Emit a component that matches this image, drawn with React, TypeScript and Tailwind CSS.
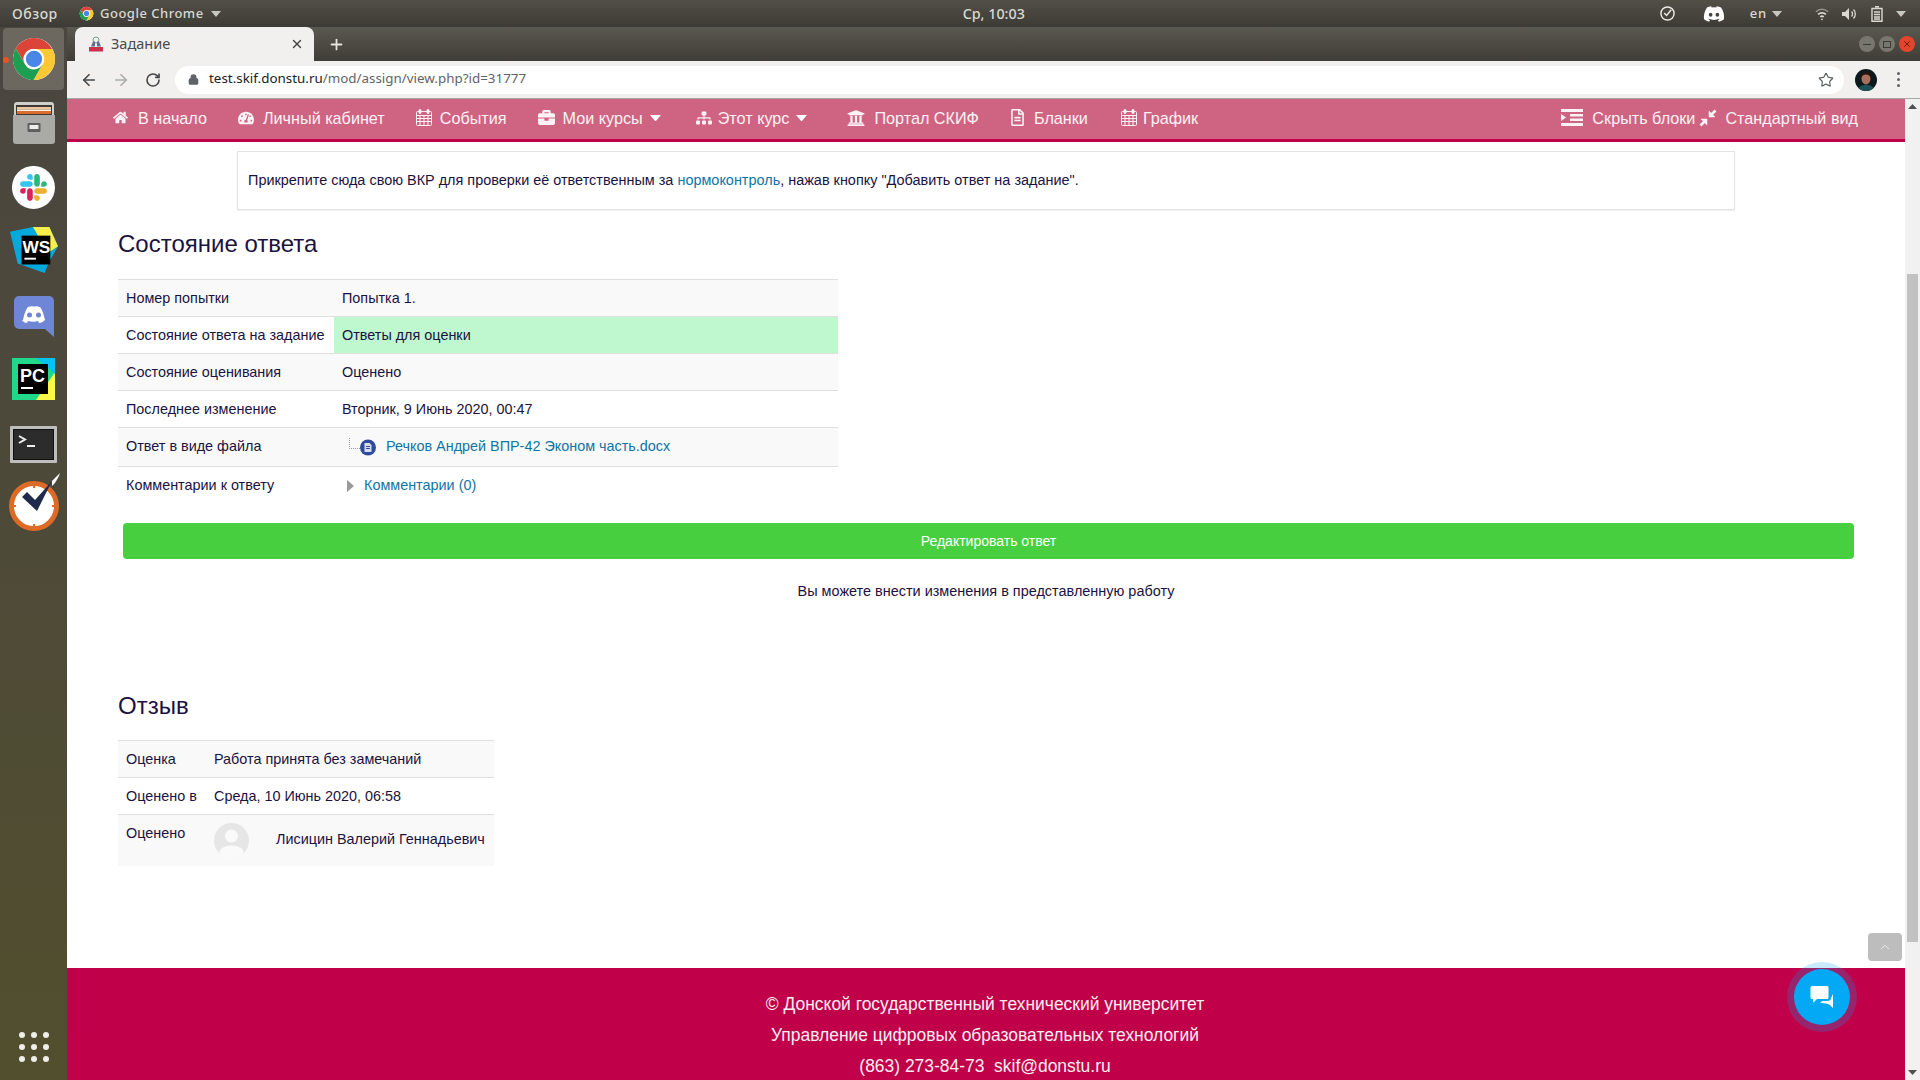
import { FaBriefcase, FaDiscord, FaHome, FaRegFileAlt, FaSitemap, FaTachometerAlt, FaUniversity } from 'react-icons/fa';
import { ArrowLeft, ArrowRight, ChevronUp, Lock, Plus, RotateCw, Star, X } from 'lucide-react';

const ChromeLogo = ({ size }: { size: number }) => (
  <svg width={size} height={size} viewBox="0 0 48 48" className="shrink-0">
    <circle cx="24" cy="24" r="22" fill="#fff" />
    <path d="M24 2C15.9 2 8.8 6.4 5 12.9l9.6 16.6A10.5 10.5 0 0 1 24 13.5h19C39.2 6.6 32.100 2 24 2z" fill="#db4437" />
    <path d="M43 13.500H24a10.500 10.500 0 0 1 9.100 15.800L23.500 46C35.500 46 46 36 46 24c0-3.800-1.100-7.400-3-10.500z" fill="#fcc934" />
    <path d="M23.500 46l9.600-16.700a10.500 10.500 0 0 1-18.500.2L5 12.900A21.900 21.900 0 0 0 2 24c0 11 8.100 20.200 18.700 21.800z" fill="#1e9e50" />
    <circle cx="24" cy="24" r="10.500" fill="#fff" />
    <circle cx="24" cy="24" r="8.500" fill="#4a86e8" />
  </svg>
);

const Caret = ({ color = '#fff', w = 10 }: { color?: string; w?: number }) => (
  <svg width={w} height={w / 2 + 1} viewBox="0 0 10 6" className="shrink-0">
    <path d="M0 0h10L5 6z" fill={color} />
  </svg>
);

// fa-calendar from the old FontAwesome: outline with rings and a grid
const CalendarIcon = () => (
  <svg width="16" height="17" viewBox="0 0 16 17" className="shrink-0" fill="none" stroke="#fdf2f5">
    <rect x="0.500" y="2.500" width="15" height="14" rx="1" />
    <path d="M0.500 6.500h15M0.500 9.500h15M0.500 12.500h15M4 6.500v10M8 6.500v10M12 6.500v10" />
    <rect x="3" y="0.500" width="2" height="4" rx="1" fill="#fdf2f5" />
    <rect x="11" y="0.500" width="2" height="4" rx="1" fill="#fdf2f5" />
  </svg>
);

const IndentIcon = () => (
  <svg width="22" height="17" viewBox="0 0 22 17" className="shrink-0" fill="#fdf2f5">
    <rect width="22" height="3" />
    <rect x="9" y="5" width="13" height="2.500" />
    <rect x="9" y="9.500" width="13" height="2.500" />
    <rect y="14" width="22" height="3" />
    <path d="M0 5l5 3.500L0 12z" />
  </svg>
);

const CompressIcon = () => (
  <svg width="18" height="18" viewBox="0 0 18 18" className="shrink-0" fill="#fdf2f5" stroke="#fdf2f5">
    <path d="M10 2v6h6z" strokeWidth="0.500" />
    <path d="M12.500 5.500l4-4" strokeWidth="2.500" />
    <path d="M8 16v-6H2z" strokeWidth="0.500" />
    <path d="M5.500 12.500l-4 4" strokeWidth="2.500" />
  </svg>
);

const TopBar = () => (
  <div className="flex h-[27px] shrink-0 items-center bg-gradient-to-b from-[#524f47] to-[#3d3b35] font-['Noto_Sans',sans-serif] text-[13px] font-medium tracking-[0.5px] text-[#d9d9d2]">
    <span className="ml-[12px] w-[67px] text-[14px]">Обзор</span>
    <ChromeLogo size={15} />
    <span className="ml-[6px] whitespace-nowrap">Google Chrome</span>
    <span className="ml-[7px]">
      <Caret color="#c8c8c2" />
    </span>
    <span className="ml-[742px] w-[63px] whitespace-nowrap text-[14.300px] tracking-normal">Ср, 10:03</span>
    <svg width="15" height="15" viewBox="0 0 16 16" className="ml-[634px] shrink-0" fill="none" stroke="#ecebe6" strokeWidth="1.500">
      <circle cx="8" cy="8" r="7" />
      <path d="M4.500 7.500l2.500 2.500 5-6" />
    </svg>
    <FaDiscord className="ml-[28px] shrink-0 text-[22px] text-white" />
    <span className="ml-[25px] w-[22px] tracking-[1px]">en</span>
    <Caret color="#c8c8c2" />
    <svg width="14" height="14" viewBox="0 0 16 16" className="ml-[33px] shrink-0" fill="none" stroke="#d9d9d2" strokeWidth="1.800">
      <path d="M1 5.500a10 10 0 0 1 14 0" opacity="0.500" />
      <path d="M3.500 8.500a6.500 6.500 0 0 1 9 0" />
      <path d="M6 11.300a3 3 0 0 1 4 0" />
      <circle cx="8" cy="14" r="1" fill="#d9d9d2" stroke="none" />
    </svg>
    <svg width="16" height="14" viewBox="0 0 16 14" className="ml-[13px] shrink-0" fill="none">
      <path d="M0 5h3l4-4v12l-4-4H0z" fill="#d9d9d2" />
      <path d="M9.500 4.500a3.500 3.500 0 0 1 0 5M11.500 2.500a6.500 6.500 0 0 1 0 9" stroke="#d9d9d2" strokeWidth="1.300" />
    </svg>
    <svg width="12" height="16" viewBox="0 0 12 16" className="ml-[13px] shrink-0" fill="none" stroke="#d9d9d2" strokeWidth="1.400">
      <path d="M4 .7h4M1 2.500h10v12.800H1z" />
      <path d="M3 6h6M3 8.500h6M3 11h6M3 13h6" />
    </svg>
    <span className="ml-[13px]">
      <Caret color="#c8c8c2" />
    </span>
  </div>
);

const WindowButton = ({ close, children }: { close?: boolean; children: React.ReactNode }) => (
  <div
    className={`flex h-[16px] w-[16px] items-center justify-center rounded-full ${
      close ? 'bg-[#e2452c]' : 'bg-[#77766f]'
    }`}
  >
    {children}
  </div>
);

const TabStrip = () => (
  <div className="flex h-[34px] shrink-0 items-end bg-gradient-to-b from-[#5a5950] to-[#3f3d37] pl-[8px]">
    <div className="flex h-[34px] w-[239px] items-center rounded-t-[8px] bg-[#f1f0ee] pb-[1px] pl-[13px] pr-[10px] font-['Noto_Sans',sans-serif] text-[14.500px] text-[#4a4a4a]">
      <svg width="16" height="16" viewBox="0 0 16 16" className="shrink-0">
        <circle cx="8" cy="4" r="3" fill="none" stroke="#6fa287" />
        <path d="M3 10.500l2-5h2v5zM9 10.500v-5h2l2 5z" fill="#5a6f93" />
        <rect x="1" y="11" width="14" height="4.500" fill="#c9314f" />
      </svg>
      <span className="ml-[7px] flex-1">Задание</span>
      <X size={14} strokeWidth={2.500} color="#444" />
    </div>
    <Plus size={17} strokeWidth={2.500} color="#e4e4e0" className="mb-[8px] ml-[14px]" />
    <div className="mb-[9px] ml-auto mr-[5px] flex gap-[4px]">
      <WindowButton>
        <span className="h-[1px] w-[8px] bg-[#3b3a35]" />
      </WindowButton>
      <WindowButton>
        <span className="h-[7px] w-[8px] border border-[#3b3a35]" />
      </WindowButton>
      <WindowButton close>
        <X size={10} strokeWidth={2} color="#5e120a" />
      </WindowButton>
    </div>
  </div>
);

const Toolbar = () => (
  <div className="flex h-[38px] shrink-0 items-center border-b border-[#a8a8a8] bg-[#f1f0ee]">
    <ArrowLeft size={18} strokeWidth={2.200} color="#45474a" className="ml-[13px]" />
    <ArrowRight size={18} strokeWidth={2.200} color="#a9aaac" className="ml-[14px]" />
    <RotateCw size={16} strokeWidth={2.400} color="#45474a" className="ml-[15px]" />
    <div className="ml-[14px] flex h-[28px] w-[1669px] items-center rounded-full bg-white pl-[13px] font-['Noto_Sans',sans-serif] text-[13.400px]">
      <Lock size={11} strokeWidth={3} color="#5f6368" fill="#5f6368" />
      <span className="mb-[2px] ml-[10px] text-[#202124]">test.skif.donstu.ru</span>
      <span className="mb-[2px] text-[#5f6368]">/mod/assign/view.php?id=31777</span>
      <Star size={16} strokeWidth={1.800} color="#5f6368" className="ml-auto mr-[10px]" />
    </div>
    <svg width="22" height="22" viewBox="0 0 22 22" className="ml-[11px] shrink-0">
      <defs>
        <clipPath id="avatar-clip">
          <circle cx="11" cy="11" r="11" />
        </clipPath>
      </defs>
      <g clipPath="url(#avatar-clip)">
        <rect width="22" height="22" fill="#0d1a1d" />
        <path d="M2 22c1-5 5-6 9-6s8 1 9 6z" fill="#1c5058" />
        <ellipse cx="11" cy="9.500" rx="4.500" ry="6" fill="#a8705a" />
        <path d="M6 9c-.5-5 3-7 6-6.500 3 .5 4.500 3 4 7-1-3-2.500-4-5-4-2 0-4 1-5 3.500z" fill="#231511" />
      </g>
    </svg>
    <div className="ml-[20px] flex flex-col gap-[3px]">
      <span className="h-[3px] w-[3px] rounded-full bg-[#5f6368]" />
      <span className="h-[3px] w-[3px] rounded-full bg-[#5f6368]" />
      <span className="h-[3px] w-[3px] rounded-full bg-[#5f6368]" />
    </div>
  </div>
);

const SlackLogo = () => (
  <svg width="43" height="43" viewBox="-37 -37 197 197" className="mt-[22px] shrink-0">
    <circle cx="61.400" cy="61.400" r="98.500" fill="#fff" />
    <path d="M25.800 77.600c0 7.100-5.800 12.900-12.900 12.900S0 84.700 0 77.600s5.800-12.900 12.900-12.900h12.900v12.900z" fill="#e01e5a" />
    <path d="M32.300 77.600c0-7.100 5.800-12.900 12.900-12.900s12.900 5.800 12.900 12.900v32.300c0 7.100-5.800 12.900-12.900 12.900s-12.900-5.800-12.900-12.900V77.600z" fill="#e01e5a" />
    <path d="M45.200 25.800c-7.100 0-12.900-5.800-12.900-12.900S38.100 0 45.200 0s12.900 5.800 12.900 12.900v12.900H45.200z" fill="#36c5f0" />
    <path d="M45.200 32.300c7.100 0 12.900 5.800 12.900 12.900s-5.800 12.900-12.900 12.900H12.900C5.800 58.100 0 52.300 0 45.200s5.800-12.900 12.900-12.900h32.300z" fill="#36c5f0" />
    <path d="M97 45.200c0-7.100 5.800-12.900 12.900-12.900s12.900 5.800 12.900 12.900-5.800 12.900-12.900 12.900H97V45.200z" fill="#2eb67d" />
    <path d="M90.500 45.200c0 7.100-5.800 12.900-12.900 12.900s-12.900-5.800-12.900-12.900V12.900C64.700 5.800 70.500 0 77.600 0s12.900 5.800 12.900 12.900v32.300z" fill="#2eb67d" />
    <path d="M77.600 97c7.100 0 12.900 5.800 12.900 12.900s-5.800 12.900-12.900 12.900-12.900-5.800-12.900-12.900V97h12.900z" fill="#ecb22e" />
    <path d="M77.600 90.500c-7.100 0-12.900-5.800-12.900-12.900s5.800-12.900 12.900-12.900h32.300c7.100 0 12.900 5.800 12.900 12.900s-5.800 12.900-12.900 12.900H77.600z" fill="#ecb22e" />
  </svg>
);

const Dock = () => (
  <div className="flex h-full w-[67px] shrink-0 flex-col items-center bg-gradient-to-b from-[#4a4640] via-[#4e4a38] to-[#514f2d]">
    <div className="relative mt-[1px] flex h-[62px] w-[61px] items-center justify-center rounded-[4px] bg-[#6c675f]">
      <span className="absolute left-0 top-[29px] h-[6px] w-[6px] rounded-full bg-[#e95420]" />
      <ChromeLogo size={46} />
    </div>
    <svg width="42" height="42" viewBox="0 0 42 42" className="mt-[12px] shrink-0">
      <path d="M1 3a3 3 0 0 1 3-3h34a3 3 0 0 1 3 3v10H1z" fill="#cfcfcc" />
      <rect x="3" y="3" width="36" height="10" fill="#3c3a37" />
      <rect x="4" y="5" width="34" height="2.500" fill="#efc79e" />
      <rect x="4" y="7.500" width="34" height="1.500" fill="#fbf3e6" />
      <rect x="4" y="9" width="34" height="3" fill="#dc6c2e" />
      <path d="M0 13h42v26a3 3 0 0 1-3 3H3a3 3 0 0 1-3-3z" fill="#aaaaa7" />
      <rect x="14.500" y="21" width="13" height="9" rx="1" fill="#5f5f5d" />
      <rect x="16.500" y="23" width="9" height="4" fill="#ecece9" />
    </svg>
    <SlackLogo />
    <svg width="48" height="48" viewBox="0 0 50 50" className="mt-[18px] shrink-0">
      <path d="M0 5L24 0h17l9 20-9 16-5 12-28-10z" fill="#07a8dc" />
      <path d="M24 0h17l9 20-9 6-8-10z" fill="#f7ee4a" />
      <rect x="12" y="9" width="30" height="30" fill="#000" />
      <text x="13" y="27" fontFamily="Liberation Sans, sans-serif" fontWeight="700" fontSize="18" fill="#fff">WS</text>
      <rect x="15" y="32" width="12" height="2" fill="#fff" />
    </svg>
    <svg width="40" height="41" viewBox="0 0 40 41" className="mt-[21px] shrink-0">
      <path d="M5 0h30a5 5 0 0 1 5 5v36l-9-8H5a5 5 0 0 1-5-5V5a5 5 0 0 1 5-5z" fill="#6f85d5" />
      <path d="M9 24c2-9 4-12 5-13 3-1 4-1 5-.500h2c1-.500 2-.500 5 .500 1 1 3 4 5 13-2 2-4 3-6 3l-1-2c-3 1-7 1-10 0l-1 2c-2 0-4-1-5-3z" fill="#fff" />
      <circle cx="15.500" cy="19" r="2.500" fill="#6f85d5" />
      <circle cx="24.500" cy="19" r="2.500" fill="#6f85d5" />
    </svg>
    <svg width="43" height="42" viewBox="0 0 43 42" className="mt-[21px] shrink-0">
      <rect width="43" height="42" fill="#21d789" />
      <path d="M24 42L43 14v28z" fill="#fcf84a" />
      <path d="M24 0h19v16z" fill="#07c3f2" />
      <rect x="6" y="6" width="30" height="30" fill="#000" />
      <text x="8" y="24" fontFamily="Liberation Sans, sans-serif" fontWeight="700" fontSize="18" fill="#fff">PC</text>
      <rect x="9" y="29" width="12" height="2" fill="#fff" />
    </svg>
    <svg width="47" height="37" viewBox="0 0 47 37" className="mt-[26px] shrink-0">
      <rect width="47" height="37" rx="1" fill="#bdbdbb" />
      <rect x="3" y="3" width="41" height="31" fill="#111" />
      <rect x="4" y="4" width="39" height="29" fill="#2c2c2c" />
      <path d="M9 10l6 3.500-6 3.500" fill="none" stroke="#eee" strokeWidth="2" />
      <path d="M17 20h8" stroke="#eee" strokeWidth="2" />
    </svg>
    <svg width="52" height="58" viewBox="0 0 52 58" className="mt-[10px] shrink-0">
      <circle cx="26" cy="33" r="22.500" fill="#fff" stroke="#dd6a26" strokeWidth="5" />
      <path d="M26 12v3M26 51v3M5 33h3M44 33h3" stroke="#dd6a26" strokeWidth="2" />
      <path d="M14 24l5-5 8 8L44 8l-15 30z" fill="#1f2b4d" />
      <path d="M44 8l8-8c-3 9-8 13-8 13z" fill="#fff" />
    </svg>
    <div className="mb-[18px] mt-auto grid grid-cols-3 gap-[6px]">
      {Array.from({ length: 9 }).map((_, i) => (
        <span key={i} className="h-[6px] w-[6px] rounded-full bg-[#eeeeea]" />
      ))}
    </div>
  </div>
);

const NavItem = ({
  icon,
  label,
  caret,
  gap,
  ml,
}: {
  icon: React.ReactNode;
  label: string;
  caret?: boolean;
  gap: string;
  ml: string;
}) => (
  <div className={`flex items-center whitespace-nowrap ${ml}`}>
    {icon}
    <span className={gap}>{label}</span>
    {caret && (
      <span className="ml-[7px]">
        <Caret w={11} />
      </span>
    )}
  </div>
);

const NavBar = () => (
  <div className="flex h-[43px] shrink-0 items-center border-b-[3px] border-[#c00048] bg-[#cf6482] pb-[2px] text-[16.200px] text-[#fdf2f5]">
    <NavItem ml="ml-[46px]" gap="ml-[10px]" icon={<FaHome className="text-[15px]" />} label="В начало" />
    <NavItem ml="ml-[31px]" gap="ml-[9px]" icon={<FaTachometerAlt className="text-[16px]" />} label="Личный кабинет" />
    <NavItem ml="ml-[31px]" gap="ml-[8px]" icon={<CalendarIcon />} label="События" />
    <NavItem ml="ml-[31px]" gap="ml-[8px]" icon={<FaBriefcase className="text-[17px]" />} label="Мои курсы" caret />
    <NavItem ml="ml-[35px]" gap="ml-[6px]" icon={<FaSitemap className="text-[16px]" />} label="Этот курс" caret />
    <NavItem ml="ml-[40px]" gap="ml-[9px]" icon={<FaUniversity className="text-[18px]" />} label="Портал СКИФ" />
    <NavItem ml="ml-[30px]" gap="ml-[8px]" icon={<FaRegFileAlt className="text-[17px]" />} label="Бланки" />
    <NavItem ml="ml-[33px]" gap="ml-[6px]" icon={<CalendarIcon />} label="График" />
    <NavItem ml="ml-auto" gap="ml-[9px]" icon={<IndentIcon />} label="Скрыть блоки" />
    <NavItem ml="ml-[4px]" gap="ml-[8px] mr-[47px]" icon={<CompressIcon />} label="Стандартный вид" />
  </div>
);

const rowLink = 'text-[#0f75a3]';
const cell = 'px-[8px] pt-[2px]';

const SubmissionTable = () => (
  <table className="ml-[51px] mt-[19px] w-[720px] border-collapse text-[14.400px]">
    <tbody>
      <tr className="h-[37px] border-y border-[#dfdfdf] bg-[#f9f9f9]">
        <td className={`w-[216px] ${cell}`}>Номер попытки</td>
        <td className={cell}>Попытка 1.</td>
      </tr>
      <tr className="h-[37px] border-b border-[#dfdfdf]">
        <td className={`whitespace-nowrap ${cell}`}>Состояние ответа на задание</td>
        <td className={`bg-[#bff8cf] ${cell}`}>Ответы для оценки</td>
      </tr>
      <tr className="h-[37px] border-b border-[#dfdfdf] bg-[#f9f9f9]">
        <td className={cell}>Состояние оценивания</td>
        <td className={cell}>Оценено</td>
      </tr>
      <tr className="h-[37px] border-b border-[#dfdfdf]">
        <td className={cell}>Последнее изменение</td>
        <td className={cell}>Вторник, 9 Июнь 2020, 00:47</td>
      </tr>
      <tr className="h-[39px] border-b border-[#dfdfdf] bg-[#f9f9f9]">
        <td className="px-[8px]">Ответ в виде файла</td>
        <td className="px-[8px]">
          <div className="flex items-center">
            <svg width="28" height="18" viewBox="0 0 28 18" className="ml-[7px] shrink-0">
              <path d="M.5 0v10.500H11" fill="none" stroke="#9a9a9a" strokeDasharray="1 1" />
              <circle cx="19" cy="9.500" r="8" fill="#2f4b9b" />
              <path d="M15.500 5h5l2 2v7h-7z" fill="#d7def2" />
              <path d="M17 8.500h4M17 10.500h4" stroke="#2f4b9b" />
            </svg>
            <span className={`ml-[9px] ${rowLink}`}>Речков Андрей ВПР-42 Эконом часть.docx</span>
          </div>
        </td>
      </tr>
      <tr className="h-[37px]">
        <td className={cell}>Комментарии к ответу</td>
        <td className={cell}>
          <div className="flex items-center">
            <svg width="7" height="12" viewBox="0 0 7 12" className="ml-[5px] shrink-0">
              <path d="M0 0l7 6-7 6z" fill="#999" />
            </svg>
            <span className={`ml-[10px] ${rowLink}`}>Комментарии (0)</span>
          </div>
        </td>
      </tr>
    </tbody>
  </table>
);

const FeedbackTable = () => (
  <table className="ml-[51px] mt-[18px] w-[376px] border-collapse text-[14.400px]">
    <tbody>
      <tr className="h-[37px] border-y border-[#dfdfdf] bg-[#f9f9f9]">
        <td className="w-[88px] pl-[8px] pt-[2px]">Оценка</td>
        <td className="pl-[8px] pt-[2px]">Работа принята без замечаний</td>
      </tr>
      <tr className="h-[37px] border-b border-[#dfdfdf]">
        <td className="pl-[8px] pt-[2px]">Оценено в</td>
        <td className="pl-[8px] pt-[2px]">Среда, 10 Июнь 2020, 06:58</td>
      </tr>
      <tr className="h-[52px] bg-[#f9f9f9]">
        <td className="pb-[12px] pl-[8px]">Оценено</td>
        <td className="pl-[8px]">
          <div className="flex items-center">
            <svg width="35" height="35" viewBox="0 0 35 35" className="shrink-0">
              <circle cx="17.500" cy="17.500" r="17.500" fill="#e6e6e6" />
              <circle cx="17.500" cy="13" r="6.500" fill="#fafafa" />
              <ellipse cx="17.500" cy="29" rx="12" ry="6.500" fill="#fafafa" />
            </svg>
            <span className="ml-[27px] whitespace-nowrap">Лисицин Валерий Геннадьевич</span>
          </div>
        </td>
      </tr>
    </tbody>
  </table>
);

const Page = () => (
  <div className="relative flex min-h-0 flex-1">
    <div className="flex min-w-0 flex-1 flex-col font-['Liberation_Sans',sans-serif] text-[#1b1240]">
      <NavBar />
      <main className="flex-1 bg-white">
        <div className="ml-[170px] mt-[9px] flex h-[59px] w-[1498px] items-center border border-[#e3e3e3] bg-white pl-[10px] pt-[1px] text-[14.450px] shadow-[0_1px_1px_rgba(0,0,0,0.05)]">
          <span>
            Прикрепите сюда свою ВКР для проверки её ответственным за <span className={rowLink}>нормоконтроль</span>, нажав кнопку "Добавить ответ на задание".
          </span>
        </div>
        <h2 className="ml-[51px] mt-[18px] text-[24px] leading-[32px]">Состояние ответа</h2>
        <SubmissionTable />
        <div className="ml-[56px] mt-[19px] flex h-[36px] w-[1731px] items-center justify-center rounded-[4px] bg-[#47cf40] pt-[2px] text-[14px] text-white">
          Редактировать ответ
        </div>
        <p className="mt-[22px] w-[1838px] text-center text-[14.450px] leading-[20px]">
          Вы можете внести изменения в представленную работу
        </p>
        <h2 className="ml-[51px] mt-[89px] text-[24px] leading-[32px]">Отзыв</h2>
        <FeedbackTable />
      </main>
      <footer className="flex h-[112px] shrink-0 flex-col items-center bg-[#c00048] pr-[2px] pt-[21px] text-[17.450px] leading-[31px] text-[#fbeef3]">
        <p>© Донской государственный технический университет</p>
        <p>Управление цифровых образовательных технологий</p>
        <p>(863) 273-84-73&nbsp; skif@donstu.ru</p>
      </footer>
    </div>
    <div className="flex w-[15px] shrink-0 flex-col items-center bg-[#f1f1f1]">
      <svg width="9" height="5" viewBox="0 0 9 5" className="mt-[5px] shrink-0">
        <path d="M0 5h9L4.500 0z" fill="#505050" />
      </svg>
      <div className="mt-[165px] h-[668px] w-[11px] shrink-0 bg-[#c1c1c1]" />
      <svg width="9" height="5" viewBox="0 0 9 5" className="mb-[5px] mt-auto shrink-0">
        <path d="M0 0h9L4.500 5z" fill="#505050" />
      </svg>
    </div>
    <div className="absolute bottom-[119px] right-[18px] flex h-[28px] w-[34px] items-center justify-center rounded-[4px] bg-[#bdbdbd]">
      <ChevronUp size={14} strokeWidth={1.500} color="#f1f1f1" />
    </div>
    <div className="absolute bottom-[55px] right-[70px] flex h-[56px] w-[56px] items-center justify-center rounded-full bg-[#03a9f4] shadow-[0_0_0_7px_rgba(3,169,244,0.22)]">
      <svg width="24" height="24" viewBox="0 0 24 24">
        <path d="M2 1h15a1.500 1.500 0 0 1 1.500 1.500v10A1.500 1.500 0 0 1 17 14H7l-4 4v-4H2a1.500 1.500 0 0 1-1.500-1.500v-10A1.500 1.500 0 0 1 2 1z" fill="#fff" />
        <path d="M23 9v14l-3-3-2-1c-3-1-6-1-8-1l2-2h5c3 0 4-1 4-3 1-1 1-3 2-4z" fill="#fff" />
      </svg>
    </div>
  </div>
);

export default function App() {
  return (
    <div className="flex h-[1080px] w-[1920px] flex-col overflow-hidden">
      <TopBar />
      <div className="flex min-h-0 flex-1">
        <Dock />
        <div className="flex min-w-0 flex-1 flex-col">
          <TabStrip />
          <Toolbar />
          <Page />
        </div>
      </div>
    </div>
  );
}
